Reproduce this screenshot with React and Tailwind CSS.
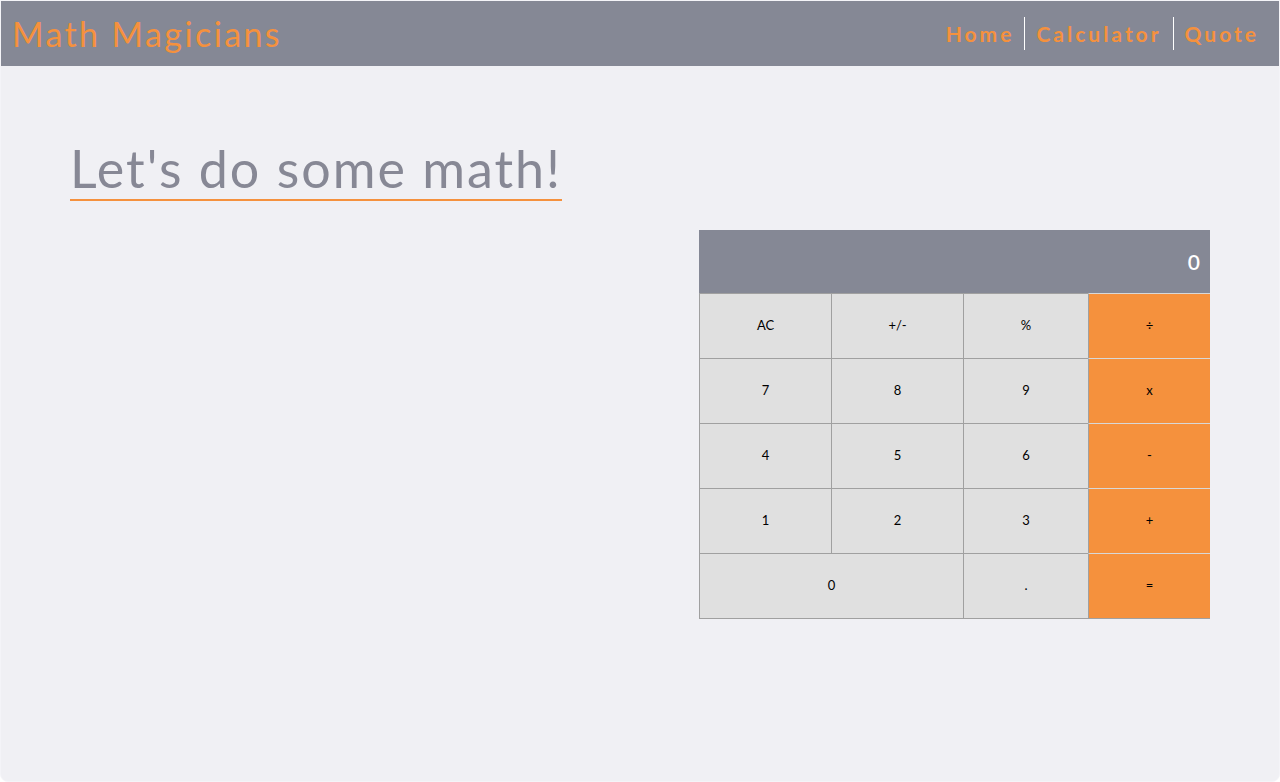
import React from 'react';

const keys = [
  { label: 'AC' }, { label: '+/-' }, { label: '%' }, { label: '÷', op: true },
  { label: '7' }, { label: '8' }, { label: '9' }, { label: 'x', op: true },
  { label: '4' }, { label: '5' }, { label: '6' }, { label: '-', op: true },
  { label: '1' }, { label: '2' }, { label: '3' }, { label: '+', op: true },
  { label: '0', wide: true }, { label: '.' }, { label: '=', op: true },
];

const Calculator = () => (
  <div className="w-[511px] font-['Lato',sans-serif]">
    <div className="h-[63px] bg-[#858895] flex items-center justify-end pr-[10px] text-white text-[21px] font-semibold">
      0
    </div>
    <div className="grid grid-cols-[132px_132px_125px_122px] border-b border-[#a0a0a0]">
      {keys.map((k) => (
        <button
          key={k.label}
          className={`h-[65px] flex items-center justify-center text-[13px] text-black border-l border-t ${
            k.wide ? 'col-span-2' : ''
          } ${k.op ? 'bg-[#f5913d] border-t-[#d8d8d8] border-l-[#a0a0a0]' : 'bg-[#e0e0e0] border-[#a0a0a0]'}`}
        >
          {k.label}
        </button>
      ))}
    </div>
  </div>
);

export default function App() {
  return (
    <div className="min-h-screen h-[782px] bg-[#f0f0f4] border border-[#f4f4f8] rounded-b-lg font-['Lato',sans-serif]">
      <header className="h-[65px] bg-[#858895] flex items-center justify-between pl-[11px] pr-[20px]">
        <h1 className="text-[34px] text-[#f5913d] tracking-[2.4px]">Math Magicians</h1>
        <nav className="flex items-center">
          <a className="text-[21px] font-bold tracking-[3px] text-[#f5913d] pr-[10px]">Home</a>
          <a className="text-[21px] font-bold tracking-[3px] text-[#f5913d] px-[11px] border-l border-white leading-[33px]">Calculator</a>
          <a className="text-[21px] font-bold tracking-[3px] text-[#f5913d] pl-[11px] border-l border-white leading-[33px]">Quote</a>
        </nav>
      </header>
      <main className="pl-[69px] pr-[69px] pt-[74px]">
        <h2 className="inline-block text-[52px] leading-[56px] tracking-[2px] text-[#878895] border-b-2 border-[#f5913d] pb-[3px]">
          Let's do some math!
        </h2>
        <div className="flex justify-end mt-[29px]">
          <Calculator />
        </div>
      </main>
    </div>
  );
}
